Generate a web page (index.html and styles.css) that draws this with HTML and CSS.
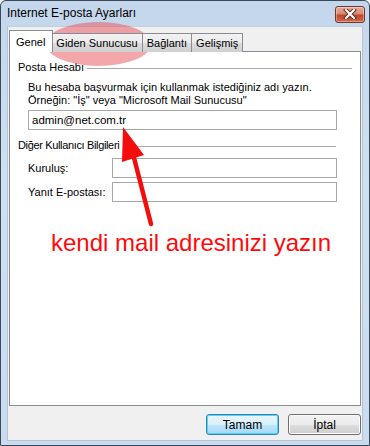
FILE: index.html
```html
<!DOCTYPE html>
<html>
<head>
<meta charset="utf-8">
<link rel="stylesheet" href="styles.css">
</head>
<body>
<div class="window">
  <div class="titlebar">
    <span class="title">Internet E-posta Ayarları</span>
    <div class="close">
      <svg width="16" height="10" viewBox="0 0 16 10"><path d="M4 1 L12 9 M12 1 L4 9" stroke="#5a2418" stroke-width="4" stroke-linecap="square"/><path d="M4 1 L12 9 M12 1 L4 9" stroke="#fff" stroke-width="2.2" stroke-linecap="square"/></svg>
    </div>
  </div>
  <div class="client">
    <div class="tabs">
      <div class="tab active">Genel</div>
      <div class="tab">Giden Sunucusu</div>
      <div class="tab">Bağlantı</div>
      <div class="tab">Gelişmiş</div>
    </div>
    <div class="panel">
      <div class="group-head"><span>Posta Hesabı</span><i class="rule"></i></div>
      <div class="indent">
        <p class="desc">Bu hesaba başvurmak için kullanmak istediğiniz adı yazın.<br>Örneğin: "İş" veya "Microsoft Mail Sunucusu"</p>
        <div class="field wide">admin@net.com.tr</div>
      </div>
      <div class="group-head second"><span>Diğer Kullanıcı Bilgileri</span><i class="rule"></i></div>
      <div class="indent">
        <div class="row first"><label>Kuruluş:</label><div class="field"></div></div>
        <div class="row"><label>Yanıt E-postası:</label><div class="field"></div></div>
      </div>
    </div>
    <div class="buttons">
      <button class="btn default">Tamam</button>
      <button class="btn">İptal</button>
    </div>
  </div>
  <div class="highlight"></div>
  <div class="note">kendi mail adresinizi yazın</div>
  <svg class="arrow" width="370" height="446" viewBox="0 0 370 446">
    <line x1="151" y1="224" x2="132" y2="150" stroke="#f40d0d" stroke-width="4.5" stroke-linecap="round"/>
    <polygon points="123,127 122,162 144,155" fill="#f40d0d"/>
  </svg>
</div>
</body>
</html>
```

FILE: styles.css
```css
* { box-sizing: border-box; }
html, body { margin: 0; padding: 0; }
body {
  font-family: "Liberation Sans", Arial, sans-serif;
  font-size: 11px;
  color: #000;
  background: #fff;
}
.window {
  position: relative;
  width: 370px;
  height: 446px;
  border: 1px solid #3b4a5a;
  border-radius: 6px 6px 0 0;
  background: linear-gradient(180deg, #c4d6eb 0%, #cfe0f2 40%, #c9dcef 100%);
  display: flex;
  flex-direction: column;
  overflow: hidden;
}
.titlebar {
  height: 25px;
  display: flex;
  align-items: center;
  justify-content: space-between;
  padding: 0 4px 0 6px;
}
.title {
  font-size: 12px;
  line-height: 15px;
  color: #000;
}
.close {
  width: 30px;
  height: 17px;
  margin-top: 1px;
  border: 1px solid #6d3a30;
  border-radius: 3px;
  background: linear-gradient(180deg, #e8aa9c 0%, #d88a76 45%, #c2452a 55%, #d5684c 100%);
  display: flex;
  align-items: center;
  justify-content: center;
  box-shadow: inset 0 0 0 1px rgba(255,255,255,0.35);
}
.client {
  flex: 1;
  margin: 0 6px 4px 6px;
  background: #f0f0f0;
  border: 1px solid #b3c4d7;
  border-top-color: #c0cfe0;
  padding: 3px 1px 5px 1px;
  display: flex;
  flex-direction: column;
}
.tabs {
  display: flex;
  align-items: flex-end;
  height: 22px;
  position: relative;
  z-index: 1;
  margin-bottom: -1px;
}
.tab {
  height: 19px;
  padding: 0 4px;
  line-height: 18px;
  border: 1px solid #898c95;
  border-bottom: none;
  margin-left: -1px;
  background: linear-gradient(180deg, #f2f2f2 0%, #ebebeb 50%, #dddddd 51%, #cfcfcf 100%);
  white-space: nowrap;
}
.tab.active {
  height: 22px;
  margin-left: 0;
  padding: 0 7px 0 6px;
  line-height: 22px;
  background: #fff;
  position: relative;
  z-index: 2;
  margin-right: -1px;
}
.panel {
  flex: 1;
  background: #fff;
  border: 1px solid #898c95;
  padding: 8px 8px 0 8px;
}
.group-head {
  display: flex;
  align-items: center;
  height: 15px;
  line-height: 15px;
}
.group-head span { white-space: nowrap; padding-right: 3px; }
.rule {
  flex: 1;
  height: 1px;
  background: #a9a9a9;
  margin-top: 1px;
}
.group-head.second { margin-top: 8px; }
.group-head.second span { letter-spacing: -0.35px; padding-right: 8px; }
.group-head.second .rule { margin-right: 16px; }
.indent { padding-left: 10px; padding-right: 15px; }
.desc {
  margin: 6px 0 0 0;
  line-height: 13px;
  white-space: nowrap;
}
.field {
  height: 20px;
  border: 1px solid #a8a8a8;
  background: #fff;
  line-height: 18px;
  padding-left: 3px;
  font-size: 11.5px;
}
.field.wide { margin-top: 3px; }
.row {
  display: flex;
  align-items: center;
  margin-top: 4px;
}
.row.first { margin-top: 5px; }
.row label { width: 84px; flex: none; white-space: nowrap; }
.row .field { flex: 1; }
.buttons {
  display: flex;
  justify-content: flex-end;
  gap: 9px;
  margin-top: 8px;
}
.btn {
  width: 73px;
  height: 21px;
  font-family: inherit;
  font-size: 12px;
  color: #000;
  border: 1px solid #707070;
  border-radius: 3px;
  background: linear-gradient(180deg, #f2f2f2 0%, #ebebeb 50%, #dddddd 51%, #cfcfcf 100%);
  box-shadow: inset 0 0 0 1px #fcfcfc;
  padding: 0;
}
.btn.default {
  border-color: #3c7fb1;
  background: linear-gradient(180deg, #eaf6fd 0%, #d9f0fc 50%, #bee6fd 51%, #a7d9f5 100%);
  box-shadow: inset 0 0 0 1px #48d8fb;
}
.highlight {
  position: absolute;
  left: 45px;
  top: 21px;
  width: 105px;
  height: 44px;
  border-radius: 50%;
  background: rgba(232, 80, 85, 0.5);
}
.note {
  position: absolute;
  left: 50px;
  top: 228px;
  font-family: "Liberation Sans", Arial, sans-serif;
  font-size: 24px;
  line-height: 28px;
  color: #ff0a0a;
  white-space: nowrap;
}
.arrow {
  position: absolute;
  left: -1px;
  top: -1px;
  pointer-events: none;
}
```
